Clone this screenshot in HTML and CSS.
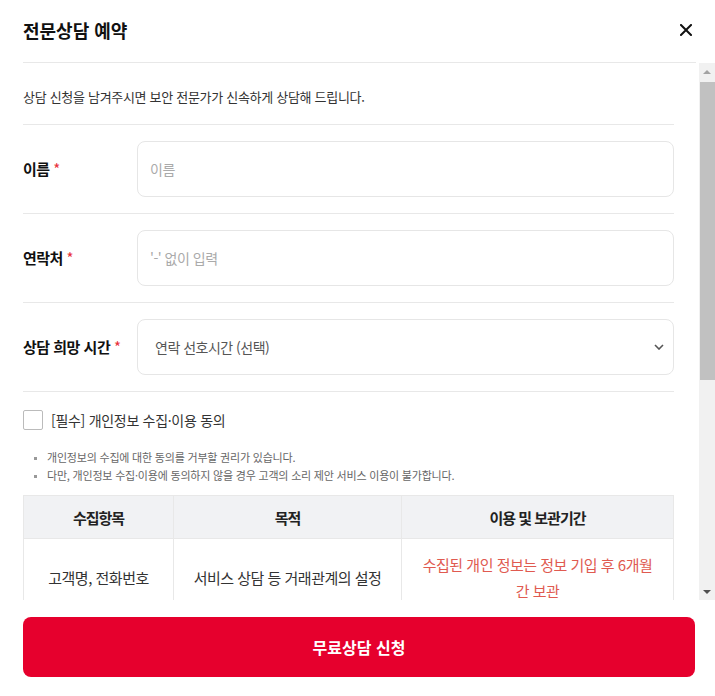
FILE: index.html
```html
<!DOCTYPE html>
<html lang="ko">
<head>
    <meta charset="UTF-8">
    <meta name="viewport" content="width=device-width, initial-scale=1.0">
    <title>전문상담 예약</title>
    <link rel="stylesheet" href="styles.css">
</head>
<body>
    <div class="modal">
        <header class="modal-head">
            <h1>전문상담 예약</h1>
            <button class="close" type="button" aria-label="닫기">
                <svg width="12" height="12" viewBox="0 0 12 12"><path d="M1 1L11 11M11 1L1 11" stroke="#111" stroke-width="2" stroke-linecap="square"/></svg>
            </button>
        </header>

        <div class="modal-main">
            <div class="modal-body">
                <p class="intro">상담 신청을 남겨주시면 보안 전문가가 신속하게 상담해 드립니다.</p>

                <!-- 입력 항목 -->
                <div class="field">
                    <label for="name">이름 <span class="req">*</span></label>
                    <input id="name" type="text" placeholder="이름">
                </div>
                <div class="field">
                    <label for="phone">연락처 <span class="req">*</span></label>
                    <input id="phone" type="text" placeholder="'-' 없이 입력">
                </div>
                <div class="field">
                    <label for="time">상담 희망 시간 <span class="req">*</span></label>
                    <div class="select-wrap">
                        <select id="time">
                            <option>연락 선호시간 (선택)</option>
                            <option>오전 (09:00 ~ 12:00)</option>
                            <option>오후 (13:00 ~ 18:00)</option>
                        </select>
                        <svg class="chevron" width="10" height="6" viewBox="0 0 10 6"><path d="M1 1L5 5L9 1" fill="none" stroke="#555" stroke-width="1.6"/></svg>
                    </div>
                </div>

                <!-- 개인정보 동의 -->
                <div class="consent">
                    <label class="check"><input type="checkbox"><span>[필수] 개인정보 수집·이용 동의</span></label>
                    <ul class="notes">
                        <li>개인정보의 수집에 대한 동의를 거부할 권리가 있습니다.</li>
                        <li>다만, 개인정보 수집·이용에 동의하지 않을 경우 고객의 소리 제안 서비스 이용이 불가합니다.</li>
                    </ul>
                    <table class="terms">
                        <colgroup><col class="c1"><col class="c2"><col></colgroup>
                        <thead>
                            <tr><th>수집항목</th><th>목적</th><th>이용 및 보관기간</th></tr>
                        </thead>
                        <tbody>
                            <tr>
                                <td>고객명, 전화번호</td>
                                <td>서비스 상담 등 거래관계의 설정</td>
                                <td class="red">수집된 개인 정보는 정보 기입 후 6개월간 보관</td>
                            </tr>
                        </tbody>
                    </table>
                </div>
            </div>

            <!-- 스크롤바 -->
            <div class="scrollbar">
                <span class="sb-btn up"></span>
                <div class="sb-track"><span class="sb-thumb"></span></div>
                <span class="sb-btn down"></span>
            </div>
        </div>

        <div class="modal-foot">
            <button class="submit" type="button">무료상담 신청</button>
        </div>
    </div>
</body>
</html>
```

FILE: styles.css
```css
* {
    box-sizing: border-box;
}
body {
    margin: 0;
    background: #fff;
    color: #333;
    font-family: "Noto Sans CJK KR", "Noto Sans", sans-serif;
    letter-spacing: -0.5px;
}
.modal {
    display: flex;
    flex-direction: column;
    height: 696px;
    background: #fff;
}

/* 헤더 */
.modal-head {
    display: flex;
    align-items: center;
    justify-content: space-between;
    flex-shrink: 0;
    height: 63px;
    margin: 0 19px 0 23px;
    border-bottom: 1px solid #e8e8e8;
}
.modal-head h1 {
    margin: 0 0 2px;
    font-size: 18px;
    font-weight: 700;
    letter-spacing: 0;
    color: #111;
}
.close {
    display: flex;
    align-items: center;
    justify-content: center;
    width: 20px;
    height: 20px;
    margin-bottom: 2px;
    padding: 0;
    border: 0;
    background: none;
    cursor: pointer;
}

/* 본문 */
.modal-main {
    flex: 1;
    display: flex;
    min-height: 0;
}
.modal-body {
    flex: 1;
    overflow: hidden;
    padding: 0 25px 0 23px;
}

.scrollbar {
    display: flex;
    flex-direction: column;
    width: 16px;
    background: #f1f1f1;
}
.sb-btn {
    display: flex;
    align-items: center;
    justify-content: center;
    height: 17px;
}
.sb-btn::before {
    content: "";
    border-left: 4px solid transparent;
    border-right: 4px solid transparent;
}
.sb-btn.up::before {
    border-bottom: 4px solid #a3a3a3;
}
.sb-btn.down::before {
    border-top: 4px solid #505050;
}
.sb-track {
    flex: 1;
    padding: 2px 0 0 1px;
}
.sb-thumb {
    display: block;
    height: 298px;
    background: #c1c1c1;
}

.intro {
    margin: 0;
    padding: 24px 0 17px;
    font-size: 13px;
    line-height: 20px;
    letter-spacing: -0.3px;
    color: #333;
    border-bottom: 1px solid #e8e8e8;
}

/* 입력 항목 */
.field {
    display: grid;
    grid-template-columns: 114px 1fr;
    align-items: center;
    padding: 16px 0;
    border-bottom: 1px solid #e8e8e8;
}
.field label {
    margin-bottom: 2px;
    font-size: 15px;
    font-weight: 700;
    color: #111;
}
.req {
    color: #e8303a;
    font-weight: 400;
}
.field input,
.field select {
    width: 100%;
    height: 56px;
    padding: 0 12px;
    border: 1px solid #e6e6e6;
    border-radius: 8px;
    font-family: inherit;
    font-size: 14px;
    letter-spacing: -0.5px;
    color: #333;
    background: #fff;
    outline: none;
}
.field input::placeholder {
    color: #aaa;
}
.select-wrap {
    position: relative;
}
.field select {
    appearance: none;
    padding-left: 17px;
    color: #555;
}
.chevron {
    position: absolute;
    right: 10px;
    top: 25px;
    pointer-events: none;
}

/* 개인정보 동의 */
.consent {
    padding-top: 18px;
}
.check {
    display: flex;
    align-items: center;
    gap: 8px;
    font-size: 14px;
    line-height: 20px;
    letter-spacing: -0.3px;
    color: #333;
}
.check input {
    appearance: none;
    width: 20px;
    height: 20px;
    margin: 0;
    border: 1px solid #bbb;
    border-radius: 2px;
    background: #fff;
}
.notes {
    margin: 18px 0 11px;
    padding-left: 24px;
    list-style: square;
    font-size: 11px;
    line-height: 18px;
    letter-spacing: -0.2px;
    color: #666;
}
.notes li::marker {
    color: #999;
    font-size: 8px;
}

.terms {
    width: 100%;
    border-collapse: collapse;
    table-layout: fixed;
    font-size: 15px;
    text-align: center;
}
.terms .c1 {
    width: 150px;
}
.terms .c2 {
    width: 228px;
}
.terms th,
.terms td {
    border: 1px solid #e8e8e8;
}
.terms th {
    height: 43px;
    background: #f1f2f4;
    font-weight: 700;
    letter-spacing: -1px;
    color: #222;
}
.terms td {
    padding: 13px 12px;
    line-height: 26px;
    color: #333;
}
.terms td.red {
    padding: 13px 17px;
    color: #e05a50;
}

/* 하단 버튼 */
.modal-foot {
    flex-shrink: 0;
    padding: 17px 20px 19px 23px;
}
.submit {
    width: 100%;
    height: 60px;
    border: 0;
    border-radius: 8px;
    background: #e6002d;
    color: #fff;
    font-family: inherit;
    font-size: 16px;
    font-weight: 700;
    letter-spacing: 0;
    cursor: pointer;
}
```
